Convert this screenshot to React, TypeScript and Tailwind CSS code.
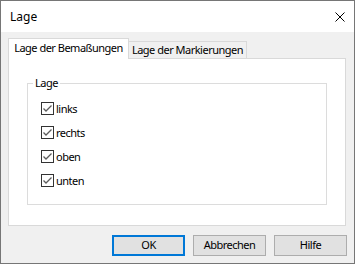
const options = ["links", "rechts", "oben", "unten"];

function CheckBox() {
  return (
    <span className="flex h-[13px] w-[13px] shrink-0 items-center justify-center border border-[#333333] bg-white">
      <svg width="11" height="11" viewBox="0 0 11 11">
        <polyline
          points="1.5,5.5 4,8 9.5,2.5"
          fill="none"
          stroke="#5c5c5c"
          strokeWidth="1.3"
        />
      </svg>
    </span>
  );
}

function Button({ label, primary }: { label: string; primary?: boolean }) {
  return (
    <button
      className={
        primary
          ? "flex h-[21px] w-[73px] items-center justify-center border-2 border-[#0078d7] bg-[#e1e1e1] text-black"
          : "flex h-[21px] w-[73px] items-center justify-center border border-[#adadad] bg-[#e1e1e1] text-black"
      }
    >
      {label}
    </button>
  );
}

export default function App() {
  return (
    <div
      className="h-[265px] w-[355px] bg-white text-[11px] tracking-[-0.5px] text-black"
      style={{ fontFamily: '"Noto Sans", "Liberation Sans", sans-serif' }}
    >
      <div className="flex h-[264px] w-[355px] flex-col border border-[#767676]">
        {/* title bar */}
        <div className="flex h-[31px] items-center justify-between bg-white pl-[9px] pr-[9px]">
          <span className="text-[12px] tracking-normal">Lage</span>
          <svg width="10" height="10" viewBox="0 0 10 10">
            <path d="M0.5 0.5 L9.5 9.5 M9.5 0.5 L0.5 9.5" stroke="#000" strokeWidth="1" />
          </svg>
        </div>

        <div className="flex flex-1 flex-col bg-[#f0f0f0] pl-[7px] pr-[7px] pt-[6px]">
          {/* tabs */}
          <div className="flex h-[20px] items-end whitespace-nowrap">
            <div className="relative z-10 -mb-px flex h-[21px] w-[121px] items-center justify-center border border-b-0 border-[#d9d9d9] bg-white pb-[2px]">
              Lage der Bemaßungen
            </div>
            <div className="flex h-[17px] w-[118px] items-center justify-center border border-l-0 border-b-0 border-[#d9d9d9] bg-[#f0f0f0]">
              Lage der Markierungen
            </div>
          </div>

          {/* panel */}
          <div className="h-[168px] w-[338px] border border-[#d9d9d9] bg-white pl-[18px] pt-[24px]">
            <div className="relative h-[122px] w-[300px] border border-[#dcdcdc] pl-[13px] pt-[18px]">
              <span className="absolute -top-[9px] left-[5px] bg-white px-[2px] leading-[16px]">
                Lage
              </span>
              <div className="flex flex-col gap-[11px]">
                {options.map((o) => (
                  <label key={o} className="flex h-[13px] items-center gap-[2px]">
                    <CheckBox />
                    <span className="leading-[13px]">{o}</span>
                  </label>
                ))}
              </div>
            </div>
          </div>

          {/* buttons */}
          <div className="mt-[9px] flex justify-end gap-[8px]">
            <Button label="OK" primary />
            <Button label="Abbrechen" />
            <Button label="Hilfe" />
          </div>
        </div>
      </div>
    </div>
  );
}
